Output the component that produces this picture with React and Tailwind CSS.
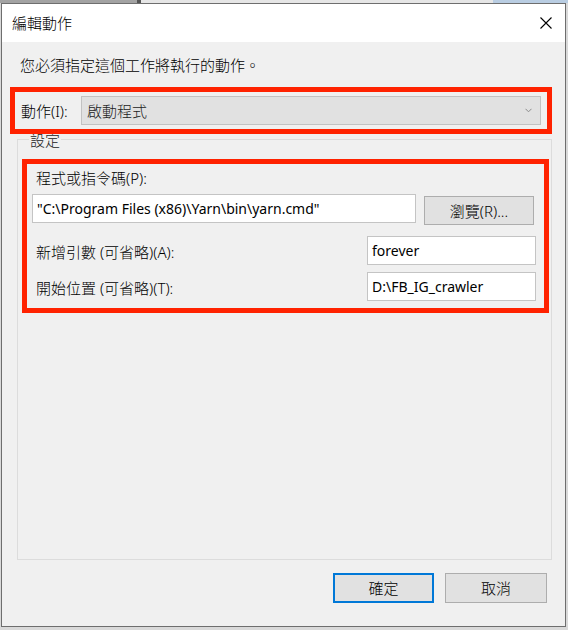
import React from "react";

const font = { fontFamily: '"Noto Sans", "Noto Sans CJK TC", sans-serif' };

function Input({ value, className }) {
  return (
    <div
      className={`h-[29px] bg-white border border-[#c4c4c4] flex items-center pl-[4px] text-[14px] leading-[20px] font-normal text-black whitespace-nowrap overflow-hidden ${className}`}
    >
      {value}
    </div>
  );
}

function Btn({ children, className }) {
  return (
    <div
      className={`flex items-center justify-center bg-[#e1e1e1] text-[15px] leading-[20px] font-light text-black ${className}`}
    >
      {children}
    </div>
  );
}

export default function App() {
  return (
    <div
      className="w-[568px] h-[630px] overflow-hidden bg-[#d9d9d9] flex flex-col"
      style={font}
    >
      <div className="h-[3px] flex shrink-0">
        <div className="w-[137px] bg-[#a3a3a3]" />
        <div className="w-[4px] bg-[#555555]" />
        <div className="flex-1 bg-[#e6e6e6]" />
        <div className="w-[75px] bg-[#b9cde2]" />
      </div>
      <div className="ml-[1px] w-[565px] h-[624px] border border-[#6e6e6e] bg-[#f0f0f0] flex flex-col shrink-0">
        {/* title bar */}
        <div className="h-[38px] bg-white flex items-center justify-between pl-[10px] pr-[13px] shrink-0">
          <span className="text-[15px] leading-[20px] font-light text-black">編輯動作</span>
          <svg width="12" height="12" viewBox="0 0 12 12">
            <path d="M0.5 0.5 L11.5 11.5 M11.5 0.5 L0.5 11.5" stroke="#000" strokeWidth="1.1" fill="none" />
          </svg>
        </div>
        {/* body */}
        <div className="flex flex-col flex-1 font-light">
          <div className="mt-[13px] pl-[18px] text-[15px] leading-[20px] text-black">
            您必須指定這個工作將執行的動作。
          </div>
          {/* red box 1 */}
          <div className="relative z-10 mt-[12px] ml-[8px] w-[542px] h-[47px] border-[5px] border-[#ff2200] flex items-center">
            <div className="w-[66px] pl-[6px] text-[15px] leading-[20px] text-black shrink-0">動作(I):</div>
            <div className="flex-1 mr-[6px] h-[29px] bg-[#e1e1e1] border border-[#c2c2c2] flex items-center justify-between pl-[5px] pr-[8px]">
              <span className="text-[15px] leading-[20px] text-[#222]">啟動程式</span>
              <svg width="7" height="5" viewBox="0 0 7 5">
                <path d="M0.5 0.8 L3.5 3.8 L6.5 0.8" stroke="#8a8a8a" strokeWidth="1" fill="none" />
              </svg>
            </div>
          </div>
          {/* group box */}
          <div className="relative mt-[5px] ml-[15px] w-[535px] h-[421px] border border-[#dcdcdc] flex flex-col">
            <span className="absolute left-[11px] top-[-10px] bg-[#f0f0f0] px-[1px] text-[15px] leading-[20px] text-[#222]">
              設定
            </span>
            {/* red box 2 */}
            <div className="mt-[19px] ml-[4px] w-[527px] h-[154px] border-[5px] border-[#ff2200] flex flex-col">
              <div className="mt-[4px] pl-[9px] text-[15px] leading-[20px] text-black">程式或指令碼(P):</div>
              <div className="mt-[6px] ml-[5px] flex items-start">
                <Input value={'"C:\\Program Files (x86)\\Yarn\\bin\\yarn.cmd"'} className="w-[384px]" />
                <Btn className="ml-[8px] mt-[2px] w-[110px] h-[29px] border border-[#adadad]">瀏覽(R)...</Btn>
              </div>
              <div className="mt-[11px] flex items-start justify-between pr-[8px]">
                <div className="mt-[6px] pl-[9px] text-[15px] leading-[20px] text-black">新增引數 (可省略)(A):</div>
                <Input value="forever" className="w-[169px]" />
              </div>
              <div className="mt-[7px] flex items-start justify-between pr-[8px]">
                <div className="mt-[6px] pl-[9px] text-[15px] leading-[20px] text-black">開始位置 (可省略)(T):</div>
                <Input value="D:\FB_IG_crawler" className="w-[169px]" />
              </div>
            </div>
          </div>
          {/* buttons */}
          <div className="mt-[13px] flex justify-end pr-[18px] gap-[11px]">
            <Btn className="w-[101px] h-[30px] border-2 border-[#0078d7]">確定</Btn>
            <Btn className="w-[102px] h-[30px] border border-[#adadad]">取消</Btn>
          </div>
        </div>
      </div>
    </div>
  );
}
